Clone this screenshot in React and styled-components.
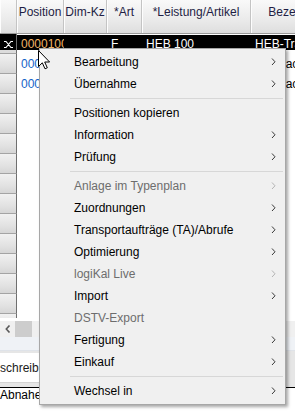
import styled, { createGlobalStyle } from 'styled-components';

const GlobalStyle = createGlobalStyle`
    html, body {
        margin: 0;
        padding: 0;
        background: #fff;
    }
    body {
        font-family: "Segoe UI", "Liberation Sans", Arial, sans-serif;
        font-size: 12px;
    }
`;

const Screen = styled.div`
    position: relative;
    width: 295px;
    height: 411px;
    overflow: hidden;
    background: #fff;
    display: flex;
    flex-direction: column;
`;

const Grid = styled.div`
    display: flex;
    flex-direction: column;
    height: 318px;
    overflow: hidden;
`;

const HeaderRow = styled.div`
    display: flex;
    height: 34px;
    flex: none;
    border-bottom: 1px solid #9a9a9a;
    box-sizing: border-box;
`;

const HeaderCell = styled.div`
    flex: none;
    width: ${p => p.$w}px;
    box-sizing: border-box;
    padding: 4px 1px 0;
    line-height: 16px;
    text-align: center;
    white-space: nowrap;
    overflow: hidden;
    color: #1e1e44;
    background: linear-gradient(180deg, #f9f9f9 0%, #ececec 55%, #dedede 100%);
    border-right: 1px solid #c4c4c4;
    box-shadow: inset 1px 0 0 #fdfdfd;
`;

const Body = styled.div`
    flex: 1;
    overflow: hidden;
`;

const Row = styled.div`
    display: flex;
    height: 20px;
    background: ${p => p.$selected
        ? 'linear-gradient(180deg, #fff 0 1px, #000 1px 16px, #fff 16px)'
        : '#fff'};
`;

const RowHead = styled.div`
    flex: none;
    width: 17px;
    box-sizing: border-box;
    display: flex;
    align-items: flex-start;
    justify-content: center;
    padding-top: 7px;
    border-right: 1px solid #6f6f6f;
    border-bottom: 1px solid #a4a4a4;
    background: ${p => p.$selected
        ? 'linear-gradient(180deg, #000 0 16px, #dcdcdc 16px)'
        : 'linear-gradient(180deg, #f1f1f1 0%, #e2e2e2 60%, #d6d6d6 100%)'};
    color: #fff;
`;

const Cell = styled.div`
    flex: none;
    width: ${p => p.$w}px;
    box-sizing: border-box;
    padding: 2px 0 0 4px;
    line-height: 16px;
    white-space: nowrap;
    overflow: hidden;
    color: ${p => p.$color || '#000'};
`;

const HScroll = styled.div`
    display: flex;
    height: 16px;
    margin-top: 3px;
    background: #f0f0f0;
`;

const ScrollButton = styled.div`
    width: 15px;
    display: flex;
    align-items: center;
    justify-content: center;
`;

const ScrollThumb = styled.div`
    width: 17px;
    background: #cdcdcd;
`;

const Strip = styled.div`
    height: 13px;
    background: #eff2f6;
    border-bottom: 1px solid #dfe3e9;
`;

const Panel = styled.div`
    height: 36px;
    padding-top: 2px;
    box-sizing: border-box;
    background: #e6e6e6;
`;

const TextBox = styled.div`
    width: 230px;
    height: 30px;
    box-sizing: border-box;
    background: #fff;
    border-bottom: 1px solid #d4d4d4;
    padding-top: 7px;
    line-height: 16px;
    color: #1a1a1a;
    white-space: nowrap;
    overflow: hidden;
`;

const BottomField = styled.div`
    flex: 1;
    border-top: 1px solid #000;
    line-height: 14px;
    background: #fff;
    color: #000;
`;

const Menu = styled.div`
    position: absolute;
    left: 39px;
    top: 48px;
    width: 247px;
    box-sizing: border-box;
    padding: 2px 0;
    background: #f0f0f0;
    border: 1px solid #a7a7a7;
    box-shadow: 2px 2px 3px rgba(0, 0, 0, 0.35);
`;

const MenuItem = styled.div`
    display: flex;
    align-items: center;
    height: 22px;
    padding: 0 9px 0 34px;
    color: ${p => p.$disabled ? '#6d6d6d' : '#000'};
    white-space: nowrap;

    span {
        flex: 1;
    }
`;

const Separator = styled.div`
    height: 1px;
    margin: 3px 2px 3px 30px;
    background: #d7d7d7;
`;

const Cursor = styled.svg`
    position: absolute;
    left: 38px;
    top: 50px;
`;

const columns = [
    { title: 'Position', w: 47 },
    { title: 'Dim-Kz', w: 43 },
    { title: '*Art', w: 35 },
    { title: '*Leistung/Artikel', w: 109 },
    { title: 'Bezeichnung', w: 105 },
];

const rows = [
    { selected: true, cells: ['00001001', '', 'F', 'HEB 100', 'HEB-Träger'] },
    { cells: ['00001002', '', '', '', 'Stirnflachblech'] },
    { cells: ['00001003', '', '', '', 'Stirnflachblech'] },
];
while (rows.length < 15) rows.push({ cells: ['', '', '', '', ''] });

const menu = [
    { label: 'Bearbeitung', sub: true },
    { label: 'Übernahme', sub: true },
    { sep: true },
    { label: 'Positionen kopieren' },
    { label: 'Information', sub: true },
    { label: 'Prüfung', sub: true },
    { sep: true },
    { label: 'Anlage im Typenplan', sub: true, disabled: true },
    { label: 'Zuordnungen', sub: true },
    { label: 'Transportaufträge (TA)/Abrufe', sub: true },
    { label: 'Optimierung', sub: true },
    { label: 'logiKal Live', sub: true, disabled: true },
    { label: 'Import', sub: true },
    { label: 'DSTV-Export', disabled: true },
    { label: 'Fertigung', sub: true },
    { label: 'Einkauf', sub: true },
    { sep: true },
    { label: 'Wechsel in', sub: true },
];

function SubArrow({ disabled }) {
    return (
        <svg width="5" height="8" viewBox="0 0 5 8">
            <path d="M1 0.5 L4 3.8 L1 7" fill="none" stroke={disabled ? '#b4b4b4' : '#3a3a3a'} strokeWidth="1" />
        </svg>
    );
}

function SelectMark() {
    return (
        <svg width="9" height="7" viewBox="0 0 9 7">
            <path d="M0 0.5 H2 L7 6.5 H9 M9 0.5 H7 L2 6.5 H0" fill="none" stroke="#fff" strokeWidth="1.1" />
        </svg>
    );
}

function cellColor(row, i) {
    if (i === 0) return row.selected ? '#f2b567' : '#1463c8';
    return row.selected ? '#fff' : '#000';
}

export default function App() {
    return (
        <Screen>
            <GlobalStyle />
            <Grid>
                <HeaderRow>
                    <HeaderCell $w={17} />
                    {columns.map(c => (
                        <HeaderCell key={c.title} $w={c.w}>{c.title}</HeaderCell>
                    ))}
                </HeaderRow>
                <Body>
                    {rows.map((r, ri) => (
                        <Row key={ri} $selected={r.selected}>
                            <RowHead $selected={r.selected}>{r.selected && <SelectMark />}</RowHead>
                            {columns.map((c, i) => (
                                <Cell key={c.title} $w={c.w} $color={cellColor(r, i)}>{r.cells[i]}</Cell>
                            ))}
                        </Row>
                    ))}
                </Body>
            </Grid>
            <HScroll>
                <ScrollButton>
                    <svg width="6" height="8" viewBox="0 0 6 8">
                        <path d="M4.5 0.5 L1.3 4 L4.5 7.5" fill="none" stroke="#5a5a5a" strokeWidth="1.6" />
                    </svg>
                </ScrollButton>
                <ScrollThumb />
            </HScroll>
            <Strip />
            <Panel>
                <TextBox>schreibung</TextBox>
            </Panel>
            <BottomField>Abnahe</BottomField>

            <Menu>
                {menu.map((m, i) => m.sep ? (
                    <Separator key={i} />
                ) : (
                    <MenuItem key={i} $disabled={m.disabled}>
                        <span>{m.label}</span>
                        {m.sub && <SubArrow disabled={m.disabled} />}
                    </MenuItem>
                ))}
            </Menu>

            <Cursor width="13" height="20" viewBox="0 0 13 20">
                <path d="M0.5 0.5 V16.5 L4.3 12.8 L7 18.8 L9.3 17.8 L6.7 12 H11.6 Z" fill="#fff" stroke="#000" strokeWidth="1" strokeLinejoin="miter" />
            </Cursor>
        </Screen>
    );
}
